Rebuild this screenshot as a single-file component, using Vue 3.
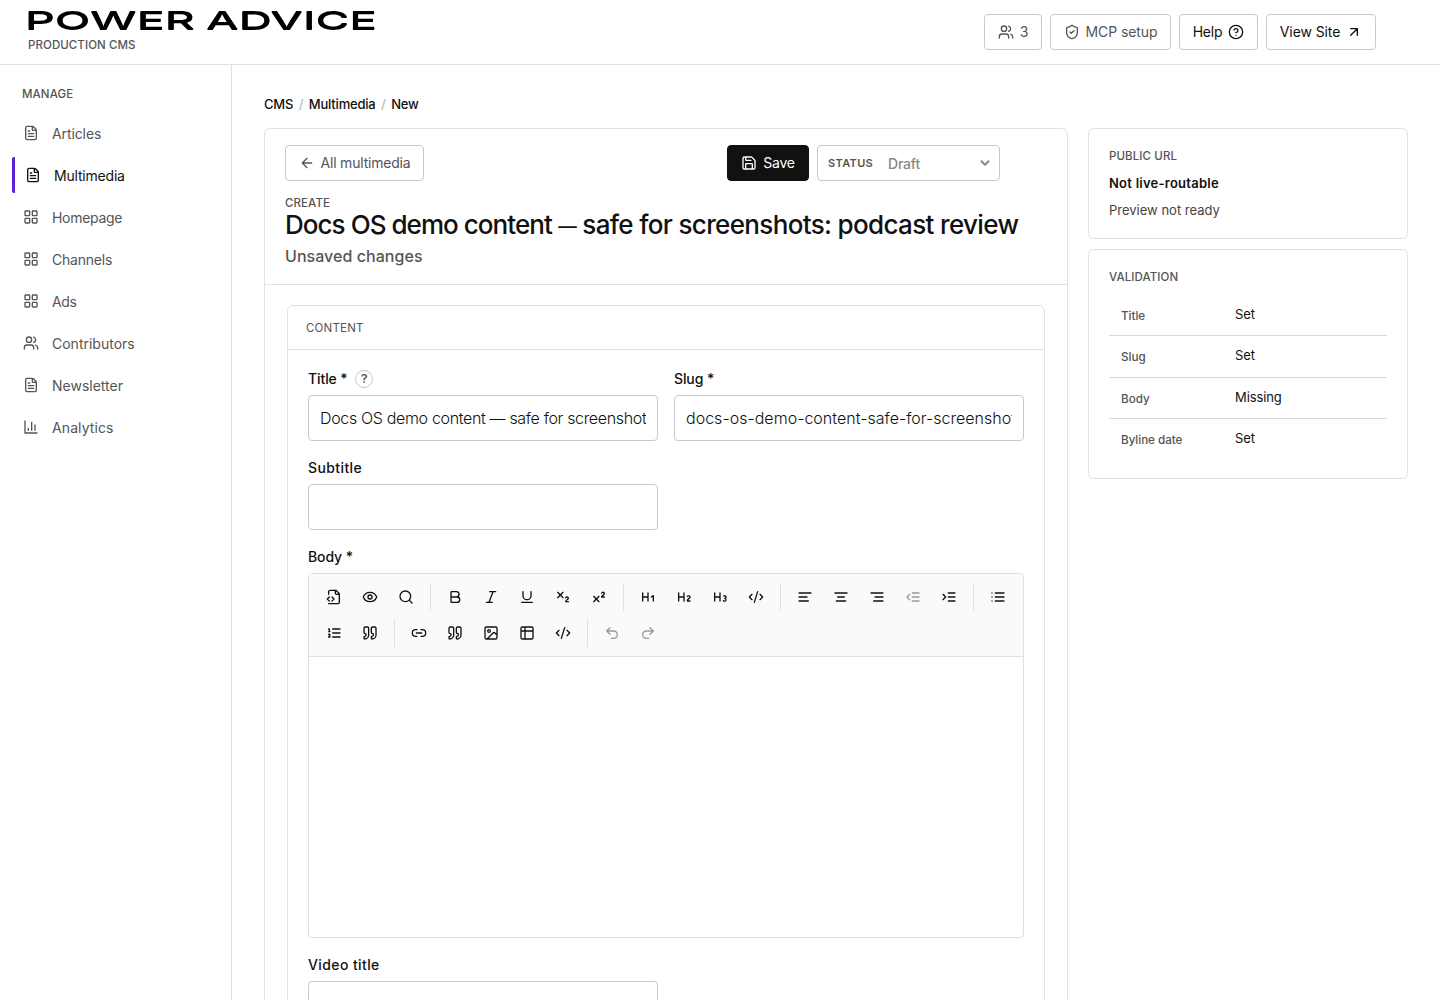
<template>
  <div class="cms">
    <header class="topbar">
      <div class="brand">
        <svg class="brand__logo" width="350" height="20" viewBox="0 0 350 20">
          <text x="-3" y="18" textLength="170" lengthAdjust="spacingAndGlyphs">POWER</text>
          <text x="178" y="18" textLength="171" lengthAdjust="spacingAndGlyphs">ADVICE</text>
        </svg>
        <span class="eyebrow brand__sub">PRODUCTION CMS</span>
      </div>
      <div class="topbar__actions">
        <button class="btn btn--users"><svg class="icon" viewBox="0 0 24 24"><path :d="icons.users" /></svg><span>3</span></button>
        <button class="btn btn--mcp"><svg class="icon" viewBox="0 0 24 24"><path :d="icons.shield" /></svg><span>MCP setup</span></button>
        <button class="btn btn--dark btn--help"><span>Help</span><svg class="icon" viewBox="0 0 24 24"><path :d="icons.help" /></svg></button>
        <button class="btn btn--dark btn--site"><span>View Site</span><svg class="icon" viewBox="0 0 24 24"><path :d="icons.arrowUpRight" /></svg></button>
      </div>
    </header>

    <div class="layout">
      <aside class="sidebar">
        <span class="eyebrow sidebar__title">MANAGE</span>
        <nav>
          <a
            v-for="item in menu"
            :key="item.label"
            class="nav-item"
            :class="{ 'nav-item--active': item.label === current }"
          >
            <svg class="icon" viewBox="0 0 24 24"><path :d="icons[item.icon]" /></svg>
            <span :style="{ letterSpacing: item.spacing + 'px' }">{{ item.label }}</span>
          </a>
        </nav>
      </aside>

      <main class="main">
        <div class="breadcrumb">
          <span>CMS</span><i>/</i><span>Multimedia</span><i>/</i><span>New</span>
        </div>

        <div class="columns">
          <section class="card editor-card">
            <div class="editor-card__head">
              <div class="actions">
                <button class="btn btn--back"><svg class="icon" viewBox="0 0 24 24"><path :d="icons.arrowLeft" /></svg><span>All multimedia</span></button>
                <div class="actions__right">
                  <button class="btn btn--save"><svg class="icon" viewBox="0 0 24 24"><path :d="icons.save" /></svg><span>Save</span></button>
                  <div class="status">
                    <b>STATUS</b>
                    <span>Draft</span>
                    <svg class="icon" viewBox="0 0 24 24"><path d="m5 8.5 7 7 7-7" /></svg>
                  </div>
                </div>
              </div>
              <span class="eyebrow create">CREATE</span>
              <h1><span class="lead">Docs OS demo content</span> <span class="dash">—</span> safe for screenshots: podcast review</h1>
              <p class="unsaved">Unsaved changes</p>
            </div>

            <div class="panel">
              <div class="panel__head"><span class="eyebrow">CONTENT</span></div>
              <div class="panel__body">
                <div class="fields">
                  <div class="field">
                    <label>Title * <em>?</em></label>
                    <input v-model="title" class="input-title" />
                  </div>
                  <div class="field">
                    <label>Slug *</label>
                    <input v-model="slug" class="input-slug" />
                  </div>
                  <div class="field">
                    <label class="optional">Subtitle</label>
                    <input v-model="subtitle" />
                  </div>
                </div>

                <div class="field body-field">
                  <label>Body *</label>
                  <div class="rte">
                    <div class="rte__toolbar">
                      <div v-for="(row, r) in toolbar" :key="r" class="rte__row">
                        <template v-for="(tool, t) in row" :key="t">
                          <i v-if="tool === '|'" class="rte__sep"></i>
                          <button v-else class="rte__btn" :class="{ 'rte__btn--off': disabled.includes(tool) }">
                            <svg class="icon" viewBox="0 0 24 24"><path :d="icons[tool]" /></svg>
                          </button>
                        </template>
                      </div>
                    </div>
                    <div class="rte__content"></div>
                  </div>
                </div>

                <div class="fields">
                  <div class="field">
                    <label class="optional">Video title</label>
                    <input v-model="videoTitle" />
                  </div>
                </div>
              </div>
            </div>
          </section>

          <div class="side">
            <section class="card side-card">
              <span class="eyebrow">PUBLIC URL</span>
              <strong>Not live-routable</strong>
              <p>Preview not ready</p>
            </section>
            <section class="card side-card side-card--validation">
              <span class="eyebrow">VALIDATION</span>
              <dl>
                <div v-for="check in checks" :key="check.name">
                  <dt>{{ check.name }}</dt>
                  <dd>{{ check.state }}</dd>
                </div>
              </dl>
            </section>
          </div>
        </div>
      </main>
    </div>
  </div>
</template>

<script setup>
import { ref } from "vue";

const current = ref("Multimedia");
const title = ref("Docs OS demo content — safe for screenshots: podcast review");
const slug = ref("docs-os-demo-content-safe-for-screenshots-podcast-review");
const subtitle = ref("");
const videoTitle = ref("");

const menu = [
  { label: "Articles", icon: "file", spacing: -0.1 },
  { label: "Multimedia", icon: "file", spacing: -0.2 },
  { label: "Homepage", icon: "grid", spacing: -0.3 },
  { label: "Channels", icon: "grid", spacing: -0.22 },
  { label: "Ads", icon: "grid", spacing: -0.4 },
  { label: "Contributors", icon: "users", spacing: 0 },
  { label: "Newsletter", icon: "file", spacing: 0 },
  { label: "Analytics", icon: "chart", spacing: 0.1 },
];

const checks = [
  { name: "Title", state: "Set" },
  { name: "Slug", state: "Set" },
  { name: "Body", state: "Missing" },
  { name: "Byline date", state: "Set" },
];

// "|" is a separator
const toolbar = [
  ["source", "eye", "search", "|", "bold", "italic", "underline", "sub", "sup", "|", "h1", "h2", "h3", "code", "|",
    "left", "center", "right", "outdent", "indent", "|", "list"],
  ["ordered", "quote", "|", "link", "quote", "image", "table", "code", "|", "undo", "redo"],
];
const disabled = ["outdent", "undo", "redo"];

const icons = {
  users: "M16 21v-2a4 4 0 0 0-4-4H6a4 4 0 0 0-4 4v2M5 7a4 4 0 1 0 8 0a4 4 0 1 0-8 0M22 21v-2a4 4 0 0 0-3-3.87M16 3.13a4 4 0 0 1 0 7.75",
  shield: "M20 13c0 5-3.5 7.5-7.66 8.95a1 1 0 0 1-.67-.01C7.5 20.5 4 18 4 13V6a1 1 0 0 1 1-1c2 0 4.5-1.2 6.24-2.72a1.17 1.17 0 0 1 1.52 0C14.51 3.81 17 5 19 5a1 1 0 0 1 1 1zM9 12l2 2 4-4",
  help: "M2 12a10 10 0 1 0 20 0a10 10 0 1 0-20 0M9.09 9a3 3 0 0 1 5.83 1c0 2-3 3-3 3M12 17h.01",
  arrowUpRight: "M7 17 17 7M7 7h10v10",
  arrowLeft: "m12 19-7-7 7-7M19 12H5",
  save: "M15.2 3a2 2 0 0 1 1.4.6l3.8 3.8a2 2 0 0 1 .6 1.4V19a2 2 0 0 1-2 2H5a2 2 0 0 1-2-2V5a2 2 0 0 1 2-2zM17 21v-7a1 1 0 0 0-1-1H8a1 1 0 0 0-1 1v7M7 3v4a1 1 0 0 0 1 1h7",
  file: "M6 22a2 2 0 0 1-2-2V4a2 2 0 0 1 2-2h8a2.4 2.4 0 0 1 1.704.706l3.588 3.588A2.4 2.4 0 0 1 20 8v12a2 2 0 0 1-2 2zM14 2v5a1 1 0 0 0 1 1h5M10 9H8M16 13H8M16 17H8",
  grid: "M4 3h5a1 1 0 0 1 1 1v5a1 1 0 0 1-1 1H4a1 1 0 0 1-1-1V4a1 1 0 0 1 1-1zM15 3h5a1 1 0 0 1 1 1v5a1 1 0 0 1-1 1h-5a1 1 0 0 1-1-1V4a1 1 0 0 1 1-1zM15 14h5a1 1 0 0 1 1 1v5a1 1 0 0 1-1 1h-5a1 1 0 0 1-1-1v-5a1 1 0 0 1 1-1zM4 14h5a1 1 0 0 1 1 1v5a1 1 0 0 1-1 1H4a1 1 0 0 1-1-1v-5a1 1 0 0 1 1-1z",
  chart: "M3 3v18h18M18 17V9M13 17V5M8 17v-3",
  source: "M4 22h14a2 2 0 0 0 2-2V7l-5-5H6a2 2 0 0 0-2 2v4M14 2v4a2 2 0 0 0 2 2h4M5 12l-3 3 3 3M9 18l3-3-3-3",
  eye: "M2.062 12.348a1 1 0 0 1 0-.696 10.75 10.75 0 0 1 19.876 0 1 1 0 0 1 0 .696 10.75 10.75 0 0 1-19.876 0M9 12a3 3 0 1 0 6 0a3 3 0 1 0-6 0",
  search: "M3 11a8 8 0 1 0 16 0a8 8 0 1 0-16 0M21 21l-4.34-4.34",
  bold: "M6 12h9a4 4 0 0 1 0 8H7a1 1 0 0 1-1-1V5a1 1 0 0 1 1-1h7a4 4 0 0 1 0 8",
  italic: "M19 4h-9M14 20H5M15 4 9 20",
  underline: "M6 4v6a6 6 0 0 0 12 0V4M4 20h16",
  sub: "m4 5 8 8M12 5l-8 8M20 19h-4c0-1.5.44-2 1.5-2.5S20 15.33 20 14c0-.47-.17-.93-.48-1.29a2.11 2.11 0 0 0-2.62-.44c-.42.24-.74.62-.9 1.07",
  sup: "m4 19 8-8M12 19l-8-8M20 12h-4c0-1.5.442-2 1.5-2.5S20 8.334 20 7.002c0-.472-.17-.93-.484-1.29a2.105 2.105 0 0 0-2.617-.436c-.42.239-.738.614-.899 1.06",
  h1: "M4 12h8M4 18V6M12 18V6M17 12l3-2v8",
  h2: "M4 12h8M4 18V6M12 18V6M21 18h-4c0-4 4-3 4-6 0-1.5-2-2.5-4-1",
  h3: "M4 12h8M4 18V6M12 18V6M17.5 10.5c1.7-1 3.5 0 3.5 1.5a2 2 0 0 1-2 2M17 17.5c2 1.5 4 .3 4-1.5a2 2 0 0 0-2-2",
  code: "m18 16 4-4-4-4M6 8l-4 4 4 4M14.5 4l-5 16",
  left: "M21 6H3M15 12H3M17 18H3",
  center: "M21 6H3M17 12H7M19 18H5",
  right: "M21 6H3M21 12H9M21 18H7",
  outdent: "M21 6H11M21 12H11M21 18H11M7 8l-4 4 4 4",
  indent: "M21 6H11M21 12H11M21 18H11M3 8l4 4-4 4",
  list: "M3 6h.01M3 12h.01M3 18h.01M8 6h13M8 12h13M8 18h13",
  ordered: "M10 6h11M10 12h11M10 18h11M4 6h1v4M4 10h2M6 18H4c0-1 2-2 2-3s-1-1.5-2-1",
  quote: "M16 3a2 2 0 0 0-2 2v6a2 2 0 0 0 2 2 1 1 0 0 1 1 1v1a2 2 0 0 1-2 2 1 1 0 0 0-1 1v2a1 1 0 0 0 1 1 6 6 0 0 0 6-6V5a2 2 0 0 0-2-2zM5 3a2 2 0 0 0-2 2v6a2 2 0 0 0 2 2 1 1 0 0 1 1 1v1a2 2 0 0 1-2 2 1 1 0 0 0-1 1v2a1 1 0 0 0 1 1 6 6 0 0 0 6-6V5a2 2 0 0 0-2-2z",
  link: "M9 17H7A5 5 0 0 1 7 7h2M15 7h2a5 5 0 1 1 0 10h-2M8 12h8",
  image: "M5 3h14a2 2 0 0 1 2 2v14a2 2 0 0 1-2 2H5a2 2 0 0 1-2-2V5a2 2 0 0 1 2-2zM7 9a2 2 0 1 0 4 0a2 2 0 1 0-4 0M21 15l-3.086-3.086a2 2 0 0 0-2.828 0L6 21",
  table: "M5 3h14a2 2 0 0 1 2 2v14a2 2 0 0 1-2 2H5a2 2 0 0 1-2-2V5a2 2 0 0 1 2-2zM3 9h18M9 3v18",
  undo: "M9 14 4 9l5-5M4 9h10.5a5.5 5.5 0 0 1 0 11H11",
  redo: "m15 14 5-5-5-5M20 9H9.5a5.5 5.5 0 0 0 0 11H13",
};
</script>

<style>
html, body {
  margin: 0;
  background: #fff;
  overflow: hidden;
}
</style>

<style scoped>
.cms {
  height: 1000px;
  overflow: hidden;
  display: flex;
  flex-direction: column;
  background: #fff;
  color: #111;
  font-family: Inter, "Noto Sans", sans-serif;
  font-size: 14px;
}
.cms * {
  box-sizing: border-box;
}
button, input {
  font-family: inherit;
  margin: 0;
}
.icon {
  width: 16px;
  height: 16px;
  flex: none;
  fill: none;
  stroke: currentColor;
  stroke-width: 2;
  stroke-linecap: round;
  stroke-linejoin: round;
}
.eyebrow {
  display: block;
  font-size: 11.5px;
  line-height: 16px;
  font-weight: 500;
  letter-spacing: 0.1px;
  color: #555;
}

.topbar {
  flex: none;
  height: 65px;
  padding: 0 64px 0 28px;
  border-bottom: 1px solid #e0e0e0;
  display: flex;
  justify-content: space-between;
  align-items: center;
}
.brand {
  align-self: flex-start;
  padding-top: 11px;
}
/* the shadow thickens only the horizontal strokes of the stretched wordmark */
.brand__logo {
  display: block;
  overflow: visible;
  fill: #000;
  font-size: 24.5px;
  font-weight: 500;
  filter: drop-shadow(0 1px 0 #000);
}
.brand__sub {
  margin-top: 6px;
  letter-spacing: 0.08px;
}
.topbar__actions {
  display: flex;
  gap: 8px;
}
.btn {
  height: 36px;
  padding: 0;
  display: flex;
  align-items: center;
  justify-content: center;
  gap: 6px;
  border: 1px solid #c8c8c8;
  border-radius: 4px;
  background: #fff;
  color: #555;
  font-size: 14px;
  font-weight: 400;
  letter-spacing: -0.2px;
  white-space: nowrap;
}
.btn span {
  padding-bottom: 2px;
}
.btn--dark {
  color: #111;
}
.btn--users {
  width: 58px;
}
.btn--mcp {
  width: 121px;
  letter-spacing: -0.1px;
}
.btn--help {
  width: 79px;
}
.btn--site {
  width: 110px;
  letter-spacing: -0.1px;
}

.layout {
  flex: 1;
  min-height: 0;
  display: flex;
}
.sidebar {
  flex: none;
  width: 232px;
  padding: 21px 12px 0;
  border-right: 1px solid #e0e0e0;
}
.sidebar__title {
  padding-left: 10px;
  letter-spacing: 0.1px;
}
.sidebar nav {
  display: flex;
  flex-direction: column;
  gap: 6px;
  margin-top: 13px;
}
.nav-item {
  height: 36px;
  padding-left: 11px;
  display: flex;
  align-items: center;
  gap: 13px;
  color: #555;
}
.nav-item .icon {
  margin-bottom: 1px;
}
.nav-item span {
  padding-top: 2px;
  line-height: 18px;
}
.nav-item--active {
  border-left: 3px solid #5b21d6;
  border-radius: 2px;
  padding-left: 10px;
  color: #111;
}

.main {
  flex: 1;
  padding: 31px 32px 0;
  min-width: 0;
}
.breadcrumb {
  display: flex;
  font-size: 13px;
  line-height: 17px;
  font-weight: 450;
  color: #111;
  letter-spacing: -0.2px;
}
.breadcrumb i {
  margin: 0 5.5px;
  color: #bbb;
  font-style: normal;
}
.columns {
  margin-top: 15px;
  display: grid;
  grid-template-columns: 804px 320px;
  gap: 20px;
  align-items: start;
}
.card {
  border: 1px solid #e2e2e2;
  border-radius: 6px;
  background: #fff;
}
.editor-card {
  height: 1200px;
}
.editor-card__head {
  height: 156px;
  padding: 16px 20px 0;
  border-bottom: 1px solid #e2e2e2;
}
.actions {
  display: flex;
  justify-content: space-between;
  padding-right: 47px;
}
.actions__right {
  display: flex;
  gap: 8px;
}
.btn--back {
  width: 139px;
}
.btn--save {
  width: 82px;
  border-color: #111;
  background: #111;
  color: #fff;
}
.status {
  width: 183px;
  height: 36px;
  padding: 0 8px 0 10px;
  display: flex;
  align-items: center;
  border: 1px solid #c8c8c8;
  border-radius: 4px;
  color: #888;
  font-weight: 500;
}
.status b {
  width: 60px;
  font-size: 11px;
  font-weight: 600;
  letter-spacing: 0.35px;
  color: #555;
}
.status span {
  flex: 1;
  letter-spacing: -0.2px;
}
.status .icon {
  width: 12px;
  height: 12px;
  stroke-width: 4;
}
.create {
  margin-top: 14px;
}
h1 {
  margin: -1px 0 0;
  font-size: 26px;
  line-height: 30px;
  font-weight: 500;
  white-space: nowrap;
  letter-spacing: -0.65px;
}
h1 .lead {
  letter-spacing: -0.95px;
}
h1 .dash {
  font-size: 18.5px;
  line-height: 1;
  vertical-align: 1px;
}
.unsaved {
  margin: 5px 0 0;
  font-size: 16px;
  line-height: 22px;
  font-weight: 500;
  letter-spacing: 0.05px;
  color: #555;
}

.panel {
  margin: 20px 22px 0;
  height: 1000px;
  border: 1px solid #e2e2e2;
  border-radius: 6px;
}
.panel__head {
  height: 44px;
  padding: 14px 18px 0;
  border-bottom: 1px solid #e2e2e2;
}
.panel__head .eyebrow {
  letter-spacing: 0.2px;
  font-weight: 400;
}
.panel__body {
  padding: 18px 20px 0;
  display: flex;
  flex-direction: column;
  gap: 16px;
}
.fields {
  display: grid;
  grid-template-columns: 350px 350px;
  gap: 16px;
}
.field label {
  display: flex;
  align-items: center;
  gap: 4px;
  height: 21px;
  margin-bottom: 6px;
  font-size: 14px;
  font-weight: 500;
  letter-spacing: -0.1px;
  white-space: pre;
}
.field .optional {
  letter-spacing: 0.4px;
}
.field label em {
  width: 18px;
  height: 18px;
  border: 1px solid #c8c8c8;
  border-radius: 50%;
  font-size: 12px;
  line-height: 16px;
  font-weight: 600;
  font-style: normal;
  text-align: center;
  color: #555;
}
.field input {
  display: block;
  width: 100%;
  height: 46px;
  padding: 0 11px;
  border: 1px solid #c8c8c8;
  border-radius: 4px;
  background: #fff;
  color: #111;
  font-size: 16px;
  font-weight: 300;
}
.field .input-title {
  letter-spacing: -0.34px;
}
.field .input-slug {
  letter-spacing: 0.02px;
}
.rte {
  height: 365px;
  border: 1px solid #e0e0e0;
  border-radius: 4px;
  overflow: hidden;
}
.rte__toolbar {
  padding: 5px 7px;
  background: #fafafa;
  border-bottom: 1px solid #e0e0e0;
}
.rte__row {
  display: flex;
  align-items: center;
  height: 36px;
}
.rte__btn {
  width: 36px;
  height: 36px;
  padding: 0;
  display: flex;
  align-items: center;
  justify-content: center;
  border: 0;
  background: none;
  color: #111;
}
.rte__btn--off {
  color: #999;
}
.rte__sep {
  width: 1px;
  height: 28px;
  margin: 0 6px;
  background: #e0e0e0;
}

.side {
  display: flex;
  flex-direction: column;
  gap: 10px;
}
.side-card {
  height: 111px;
  padding: 19px 20px 0;
  font-size: 13px;
}
.side-card strong {
  display: block;
  margin-top: 10px;
  line-height: 18px;
  font-weight: 600;
  letter-spacing: 0.25px;
}
.side-card p {
  margin: 9px 0 0;
  line-height: 18px;
  color: #444;
}
.side-card--validation {
  height: 230px;
}
dl {
  margin: 10px 0 0;
}
dl div {
  height: 41.4px;
  padding: 0 12px;
  display: grid;
  grid-template-columns: 114px 1fr;
  border-bottom: 1px solid #d8d8d8;
}
dl div:last-child {
  border-bottom: 0;
}
dt {
  padding-top: 13px;
  font-size: 11.7px;
  line-height: 16px;
  font-weight: 500;
  letter-spacing: -0.05px;
  color: #555;
}
dd {
  margin: 0;
  padding-top: 11px;
  line-height: 17px;
  font-weight: 400;
  letter-spacing: -0.1px;
}
</style>
